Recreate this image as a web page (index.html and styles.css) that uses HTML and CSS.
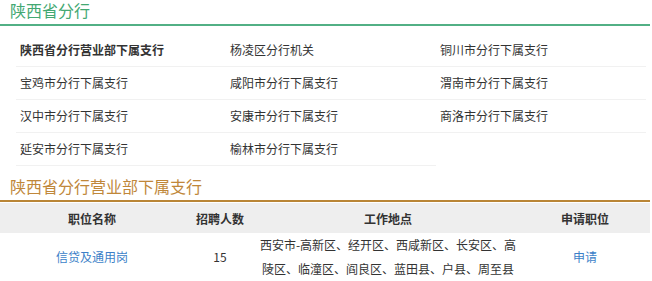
FILE: index.html
```html
<!DOCTYPE html>
<html lang="zh">
<head>
    <meta charset="UTF-8">
    <meta name="viewport" content="width=device-width, initial-scale=1.0">
    <title>陕西省分行</title>
    <link rel="stylesheet" href="styles.css">
</head>
<body>
    <div class="branch">
        <h2 class="title title-green">陕西省分行</h2>
        <ul class="branch-list">
            <li class="active">陕西省分行营业部下属支行</li>
            <li>杨凌区分行机关</li>
            <li>铜川市分行下属支行</li>
            <li>宝鸡市分行下属支行</li>
            <li>咸阳市分行下属支行</li>
            <li>渭南市分行下属支行</li>
            <li>汉中市分行下属支行</li>
            <li>安康市分行下属支行</li>
            <li>商洛市分行下属支行</li>
            <li>延安市分行下属支行</li>
            <li>榆林市分行下属支行</li>
        </ul>

        <h2 class="title title-brown">陕西省分行营业部下属支行</h2>
        <table class="jobs">
            <thead>
                <tr>
                    <th class="col-name">职位名称</th>
                    <th class="col-num">招聘人数</th>
                    <th class="col-place">工作地点</th>
                    <th class="col-apply">申请职位</th>
                </tr>
            </thead>
            <tbody>
                <tr>
                    <td><a href="#">信贷及通用岗</a></td>
                    <td>15</td>
                    <td class="place">西安市-高新区、经开区、西咸新区、长安区、高陵区、临潼区、阎良区、蓝田县、户县、周至县</td>
                    <td><a href="#">申请</a></td>
                </tr>
            </tbody>
        </table>
    </div>
</body>
</html>
```

FILE: styles.css
```css
body {
    margin: 0;
    font-family: "Noto Sans CJK SC", "Microsoft YaHei", sans-serif;
    font-size: 12px;
    color: #333;
    background: #fff;
}

.branch {
    width: 650px;
}

.title {
    margin: 0;
    padding: 1px 10px 5px;
    font-size: 16px;
    line-height: 18px;
    font-weight: normal;
}

.title-green {
    color: #43a872;
    border-bottom: 2px solid #52b085;
}

.title-brown {
    color: #c0873a;
    border-bottom: 2px solid #b98536;
}

.branch-list {
    list-style: none;
    margin: 8px 0 10px 16px;
    padding: 0;
    display: grid;
    grid-template-columns: repeat(3, 210px);
}

.branch-list li {
    height: 32px;
    line-height: 32px;
    padding-left: 4px;
    border-bottom: 1px solid #f1f1f1;
}

.branch-list li.active {
    font-weight: bold;
}

.jobs {
    width: 650px;
    border-collapse: collapse;
    margin-top: 1px;
    table-layout: fixed;
}

.jobs th {
    background: #eeeeee;
    height: 30px;
    padding: 0;
    font-weight: bold;
    text-align: center;
}

.col-name { width: 184px; }
.col-num { width: 72px; }
.col-place { width: 264px; }
.col-apply { width: 130px; }

.jobs td {
    padding: 0;
    line-height: 24px;
    text-align: center;
    border-bottom: 1px dashed #e3e3e3;
}

.jobs td.place {
    line-break: anywhere;
}

.jobs a {
    color: #3c7fc8;
    text-decoration: none;
}
```
